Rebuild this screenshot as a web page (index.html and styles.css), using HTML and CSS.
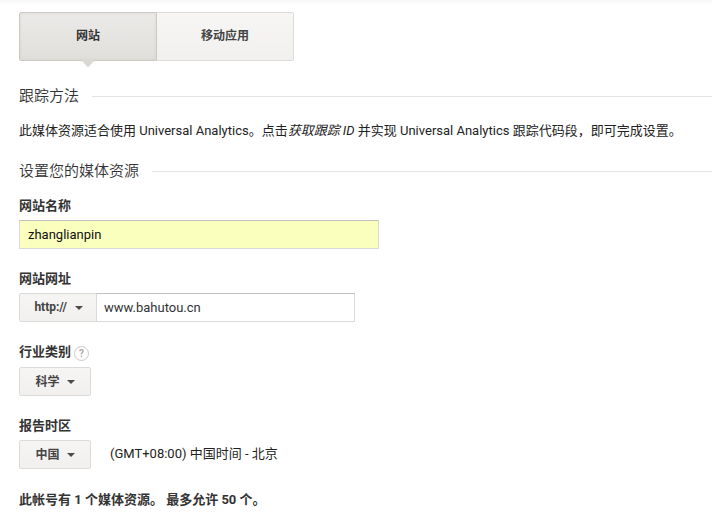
FILE: index.html
```html
<!DOCTYPE html>
<html lang="zh-CN">
<head>
<meta charset="utf-8">
<title>新建媒体资源</title>
<link rel="stylesheet" href="styles.css">
</head>
<body>
<main class="page">
  <nav class="tabs">
    <div class="tab tab-active">网站<svg class="pointer" width="14" height="8" viewBox="0 0 14 8"><path d="M0 0H14L7 7.5Z" fill="#dad8d2"/></svg></div>
    <div class="tab">移动应用</div>
  </nav>
  <h2 class="heading"><span>跟踪方法</span></h2>
  <p class="intro">此媒体资源适合使用 Universal Analytics。点击<em>获取跟踪 ID</em> 并实现 Universal Analytics 跟踪代码段，即可完成设置。</p>
  <h2 class="heading"><span>设置您的媒体资源</span></h2>
  <section class="field">
    <div class="label">网站名称</div>
    <input class="input name" type="text" value="zhanglianpin">
  </section>
  <section class="field">
    <div class="label">网站网址</div>
    <div class="row">
      <button class="select protocol">http://<i class="caret"></i></button>
      <input class="input url" type="text" value="www.bahutou.cn">
    </div>
  </section>
  <section class="field category">
    <div class="label">行业类别<span class="help">?</span></div>
    <button class="select">科学<i class="caret"></i></button>
  </section>
  <section class="field">
    <div class="label">报告时区</div>
    <div class="row">
      <button class="select">中国<i class="caret"></i></button>
      <span class="zone">(GMT+08:00) 中国时间 - 北京</span>
    </div>
  </section>
  <p class="quota">此帐号有 1 个媒体资源。 最多允许 50 个。</p>
</main>
</body>
</html>
```
FILE: styles.css
```css
* { box-sizing: border-box; }
body {
  margin: 0;
  height: 518px;
  overflow: hidden;
  background: linear-gradient(#f7f7f7, #fff 5px) no-repeat #fff;
  color: #222;
  font: 13px/20px Roboto, "Noto Sans CJK SC", sans-serif;
}
.page { padding: 12px 0 0 19px; }
.tabs { display: flex; width: 275px; height: 49px; }
.tab {
  position: relative;
  flex: 1;
  border: 1px solid #dcdbd6;
  border-left: 0;
  border-radius: 0 2px 2px 0;
  background: linear-gradient(#f7f6f4, #f1f0ee);
  color: #444;
  font-size: 12px;
  font-weight: 700;
  line-height: 46px;
  text-align: center;
}
.tab-active {
  flex: 0 0 138px;
  border: 1px solid #cdcac3;
  border-radius: 2px 0 0 2px;
  background: linear-gradient(#ebeae8, #e1dfdb);
  box-shadow: inset 0 0 3px rgba(100, 95, 80, .12);
  color: #333;
}
.pointer { position: absolute; left: 61px; top: 47px; }
.heading {
  display: flex;
  align-items: center;
  gap: 13px;
  height: 22px;
  margin: 24px 0 0;
  color: #333;
  font-size: 15px;
  font-weight: 350;
  line-height: 22px;
}
.heading::after { content: ""; flex: 1; height: 1px; background: #e3e3df; }
.intro { height: 20px; margin: 14px 0 0; white-space: nowrap; }
.intro + .heading { margin-top: 19px; }
.field { height: 73px; }
.heading + .field { margin-top: 14px; }
.label {
  display: flex;
  align-items: center;
  height: 20px;
  margin-bottom: 4px;
  color: #333;
  font-weight: 700;
}
.category { height: 74px; }
.category .label { margin-bottom: 5px; }
.category + .field { height: 74px; }
.row { display: flex; }
.input {
  display: block;
  height: 29px;
  margin: 0;
  padding: 0 8px;
  border: 1px solid #d9d9d9;
  border-top-color: #c0c0c0;
  border-radius: 0;
  background: #fff;
  color: #333;
  font: 13px Roboto, sans-serif;
}
.name { width: 360px; background: #faffbd; color: #111; }
.url { width: 259px; margin-left: -1px; padding-left: 7px; }
.select {
  display: flex;
  align-items: center;
  gap: 7.5px;
  width: 72px;
  height: 29px;
  padding: 0 0 3px 15.5px;
  border: 1px solid #dcdbd8;
  border-radius: 2px;
  background: linear-gradient(#f6f5f4, #f1f0ee);
  color: #444;
  font: 700 12px Roboto, "Noto Sans CJK SC", sans-serif;
}
.protocol { gap: 8px; width: 78px; padding: 0 0 1px 14.4px; border-radius: 2px 0 0 2px; }
.caret {
  margin-top: 4px;
  border: 4px solid transparent;
  border-top-color: #4d4b48;
  border-bottom: 0;
}
.protocol .caret { margin-top: 2px; }
.help {
  width: 15px;
  height: 15px;
  margin: 2px 0 0 3px;
  border: 1px solid #c8c8c4;
  border-radius: 50%;
  color: #aaa;
  font-size: 10px;
  line-height: 13px;
  text-align: center;
}
.zone { margin-left: 19px; line-height: 27px; }
.quota { margin: 0; color: #333; font-weight: 700; white-space: nowrap; }
```
